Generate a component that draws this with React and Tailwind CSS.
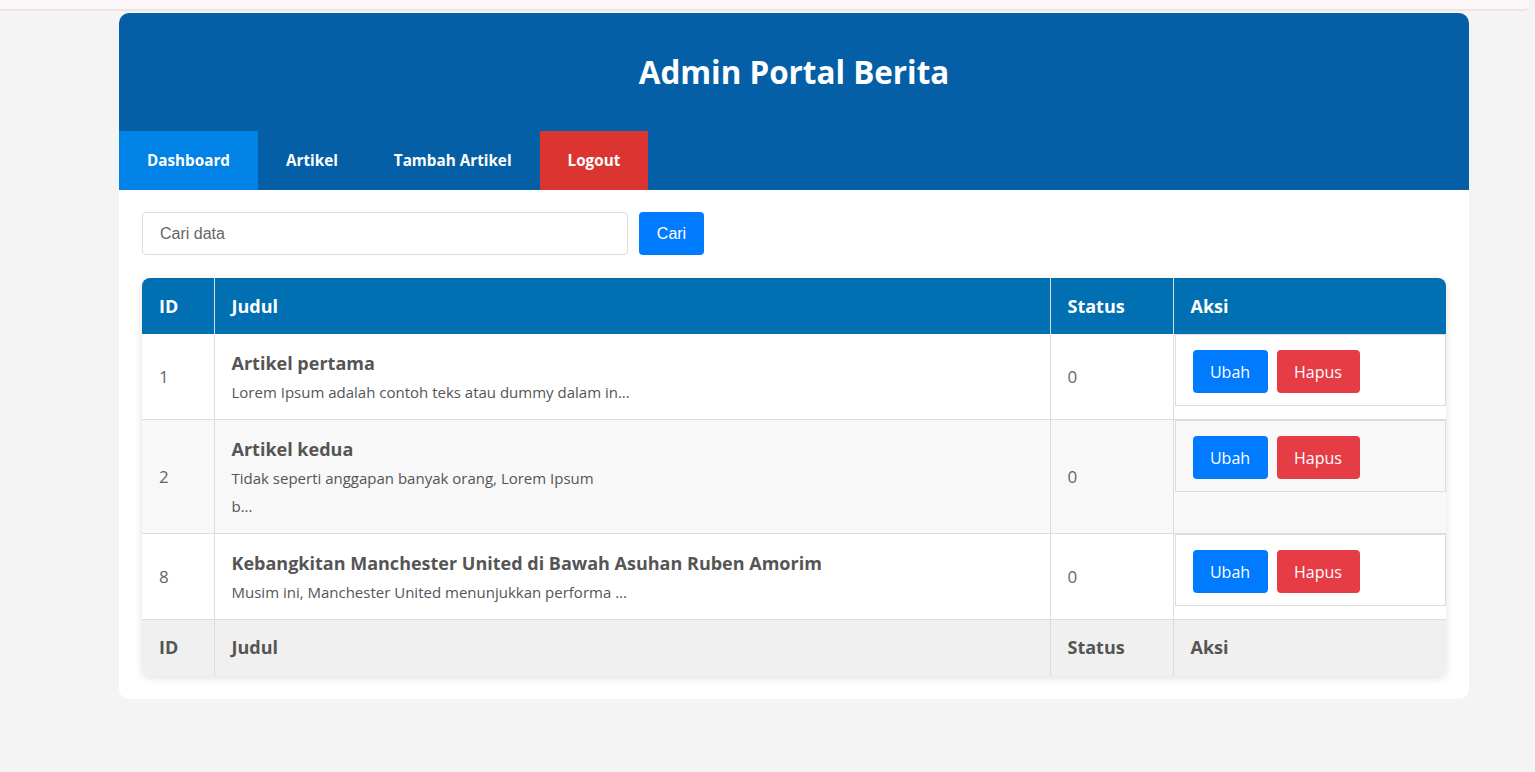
const rows = [
  { id: 1, title: 'Artikel pertama', desc: ['Lorem Ipsum adalah contoh teks atau dummy dalam in...'], status: 0 },
  { id: 2, title: 'Artikel kedua', desc: ['Tidak seperti anggapan banyak orang, Lorem Ipsum', 'b...'], status: 0 },
  { id: 8, title: 'Kebangkitan Manchester United di Bawah Asuhan Ruben Amorim', desc: ['Musim ini, Manchester United menunjukkan performa ...'], status: 0 },
]

const navItems = [
  { label: 'Dashboard', cls: 'bg-[#0082e6]' },
  { label: 'Artikel', cls: '' },
  { label: 'Tambah Artikel', cls: '' },
  { label: 'Logout', cls: 'bg-[#dc3531]' },
]

export default function App() {
  return (
    <div className="min-h-[772px] bg-[#f4f4f4] font-['Open_Sans',sans-serif] text-[#555]">
      <div className="h-[11px] w-[1530px] rounded-br-[6px] border-b-2 border-[#f1e2ea] bg-[#fdf6f8]" />
      <div className="ml-[119px] mt-[2px] w-[1350px] overflow-hidden rounded-[10px] bg-white">
        <header className="bg-[#045fa6]">
          <div className="flex h-[118px] items-center justify-center">
            <h1 className="text-[31.4px] font-bold text-white">Admin Portal Berita</h1>
          </div>
          <nav className="flex">
            {navItems.map((n) => (
              <a key={n.label} className={`flex h-[59px] items-center px-[28px] text-[15.25px] font-bold text-white ${n.cls}`}>
                {n.label}
              </a>
            ))}
          </nav>
        </header>

        <div className="px-[23px] pb-[23px] pt-[22px]">
          <div className="flex gap-[11px]">
            <input
              placeholder="Cari data"
              className="h-[43px] w-[486px] rounded-[4px] border border-[#dcdcdc] px-[17px] font-['Liberation_Sans',sans-serif] text-[16px] text-[#555] placeholder:text-[#666] outline-none"
            />
            <button className="h-[43px] w-[65px] rounded-[4px] bg-[#007bff] font-['Liberation_Sans',sans-serif] text-[16px] text-white">
              Cari
            </button>
          </div>

          <div className="mt-[23px] overflow-hidden rounded-[8px] shadow-[0_2px_8px_rgba(0,0,0,0.12)]">
            <table className="w-full table-fixed border-collapse">
              <thead>
                <tr className="bg-[#0070b3] text-left text-[18px] font-bold text-white">
                  <th className="h-[56px] w-[72px] border-r border-[#ddd] px-[17px]">ID</th>
                  <th className="border-r border-[#ddd] px-[17px]">Judul</th>
                  <th className="w-[123px] border-r border-[#ddd] px-[17px]">Status</th>
                  <th className="w-[273px] px-[17px]">Aksi</th>
                </tr>
              </thead>
              <tbody>
                {rows.map((r, i) => (
                  <tr key={r.id} className={`border-b border-[#ddd] ${i % 2 === 1 ? 'bg-[#f8f8f8]' : 'bg-white'}`}>
                    <td className="border-r border-[#ddd] px-[17px] text-[17px] text-[#666]">{r.id}</td>
                    <td className="border-r border-[#ddd] px-[17px] pb-[13px] pt-[16px]">
                      <div className="mb-[2px] text-[18px] font-bold leading-[26px]">{r.title}</div>
                      {r.desc.map((d) => (
                        <div key={d} className="text-[15px] leading-[28px]">{d}</div>
                      ))}
                    </td>
                    <td className="border-r border-[#ddd] px-[17px] text-[17px] text-[#666]">{r.status}</td>
                    <td className="p-0 align-top">
                      <div className="ml-[1px] flex gap-[9px] border border-[#ddd] px-[17px] pb-[12px] pt-[15px]">
                        <button className="h-[43px] w-[75px] rounded-[4px] bg-[#007bff] text-[16px] text-white">Ubah</button>
                        <button className="h-[43px] w-[83px] rounded-[4px] bg-[#e63c46] text-[16px] text-white">Hapus</button>
                      </div>
                    </td>
                  </tr>
                ))}
              </tbody>
              <tfoot>
                <tr className="bg-[#f0f0f0] text-left text-[18px] font-bold text-[#555]">
                  <th className="h-[56px] border-r border-[#ddd] px-[17px]">ID</th>
                  <th className="border-r border-[#ddd] px-[17px]">Judul</th>
                  <th className="border-r border-[#ddd] px-[17px]">Status</th>
                  <th className="px-[17px]">Aksi</th>
                </tr>
              </tfoot>
            </table>
          </div>
        </div>
      </div>
    </div>
  )
}
